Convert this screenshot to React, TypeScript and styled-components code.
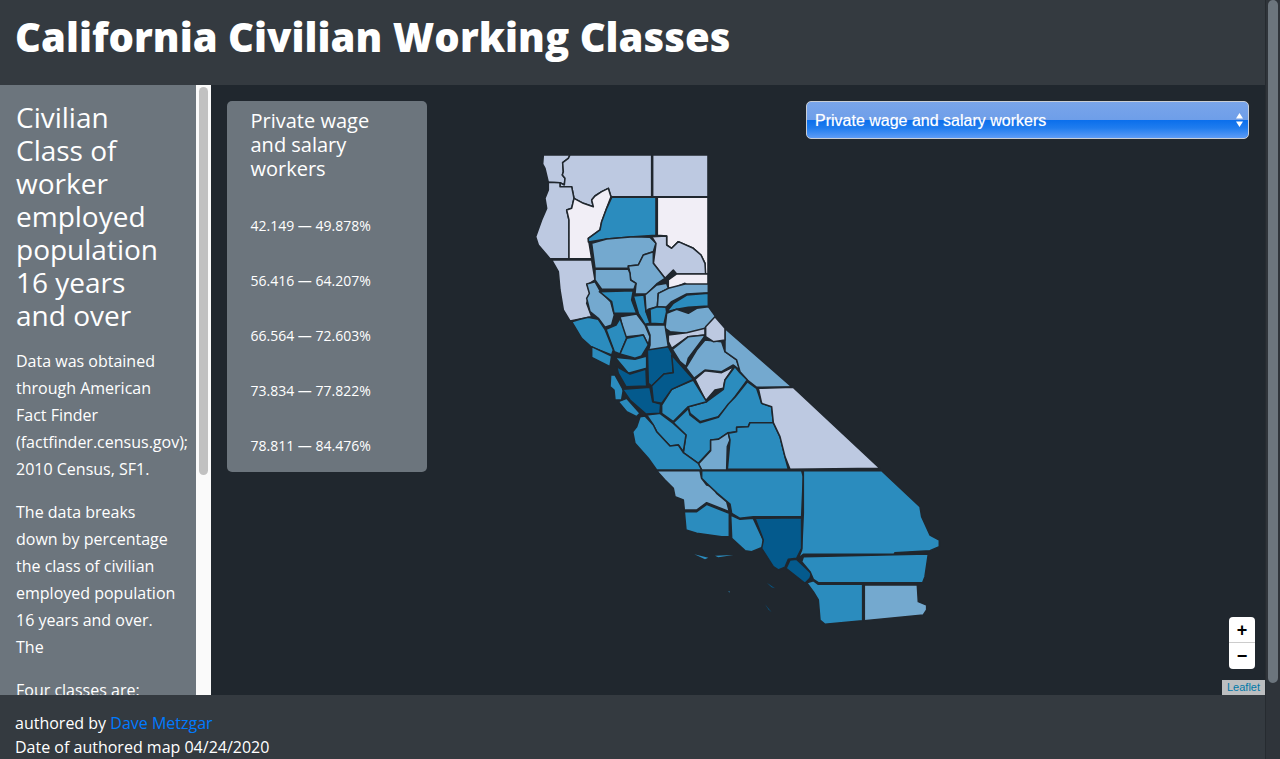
import React from "react";
import styled, { createGlobalStyle } from "styled-components";

const Global = createGlobalStyle`
  html, body { height: 100%; overflow: hidden; background: #343a40; }
  body { margin: 0; font-family: "Open Sans", "Liberation Sans", sans-serif; color: #fff; }
  #root { height: 100%; }
  * { box-sizing: border-box; }
`;

const Frame = styled.div`
  display: flex;
  height: 100%;
`;

const Page = styled.div`
  display: flex;
  flex-direction: column;
  flex: 1;
  min-width: 0;
`;

const PageTrack = styled.div`
  flex: none;
  width: 15px;
  background: #2f343a;
  border-left: 1px solid #262b30;
  padding: 0 2px 0 2px;
`;

const PageThumb = styled.div`
  height: 683px;
  background: #6c757d;
  border-radius: 5px;
`;

const Header = styled.header`
  height: 85px;
  flex: none;
  background: #343a40;
  padding: 9px 15px 0;
`;

const Title = styled.h1`
  margin: 0;
  font-size: 40px;
  line-height: 56px;
  font-weight: 800;
  letter-spacing: 0.03px;
`;

const Main = styled.main`
  display: flex;
  flex: none;
  height: 610px;
`;

const Sidebar = styled.aside`
  display: flex;
  width: 211px;
  flex: none;
  background: #6c757d;
`;

const SideContent = styled.div`
  flex: 1;
  min-width: 0;
  padding: 16px 16px 0;
  overflow: hidden;
`;

const SideTrack = styled.div`
  flex: none;
  width: 15px;
  background: #fafafa;
  padding: 2px 3px;
`;

const SideThumb = styled.div`
  height: 388px;
  background: #c1c1c1;
  border-radius: 5px;
`;

const SideTitle = styled.h3`
  margin: 0 0 16px;
  font-size: 28px;
  line-height: 33px;
  font-weight: 400;
`;

const SideText = styled.p`
  margin: 0 0 16px;
  font-size: 16px;
  line-height: 27px;
`;

const MapArea = styled.section`
  position: relative;
  flex: 1;
  background: #20272e;
  overflow: hidden;
`;

const MapSvg = styled.svg`
  position: absolute;
  inset: 0;
  width: 100%;
  height: 100%;
`;

const Legend = styled.div`
  position: absolute;
  left: 16px;
  top: 16px;
  width: 200px;
  height: 371px;
  background: #6c757d;
  border-radius: 5px;
  padding: 8px 23.5px;
`;

const LegendTitle = styled.h5`
  margin: 0 0 35px;
  font-size: 20px;
  line-height: 24px;
  font-weight: 400;
`;

const LegendList = styled.div`
  display: flex;
  flex-direction: column;
  gap: 36px;
`;

const LegendItem = styled.div`
  font-size: 14px;
  line-height: 19px;
`;

const SelectWrap = styled.div`
  position: absolute;
  top: 16px;
  right: 16px;
  width: 443px;
  height: 38px;
`;

const Select = styled.select`
  appearance: none;
  width: 100%;
  height: 100%;
  padding: 0 8px;
  border: 1px solid #c9ced6;
  border-radius: 5px;
  color: #fff;
  font-family: "Liberation Sans", Arial, sans-serif;
  font-size: 16px;
  text-shadow: 0 0 1px rgba(255, 255, 255, 0.5);
  background: linear-gradient(180deg, #79a5ea 0%, #6e9ee9 49%, #0b6fec 51%, #1f7cee 72%, #5e9cf6 100%);
  outline: none;
`;

const Arrows = styled.svg`
  position: absolute;
  right: 5px;
  top: 11px;
  width: 9px;
  height: 16px;
`;

const Zoom = styled.div`
  position: absolute;
  right: 10px;
  top: 532px;
  width: 26px;
  height: 52px;
  background: #fff;
  border-radius: 4px;
  display: flex;
  flex-direction: column;
`;

const ZoomButton = styled.div<{ $top?: boolean }>`
  height: 26px;
  color: #000;
  text-align: center;
  font-family: "Liberation Sans", Arial, sans-serif;
  font-weight: 700;
  font-size: 18px;
  line-height: 26px;
  border-bottom: ${(p) => (p.$top ? "1px solid #ccc" : "none")};
`;

const Attribution = styled.div`
  position: absolute;
  right: 0;
  bottom: 0;
  height: 15px;
  padding: 0 5px;
  background: rgba(255, 255, 255, 0.7);
  color: #0078a8;
  font-family: "Liberation Sans", Arial, sans-serif;
  font-size: 11px;
  line-height: 15px;
`;

const Footer = styled.footer`
  flex: 1;
  background: #343a40;
  padding: 16px 15px 0;
  font-size: 16px;
  line-height: 24px;
`;

const AuthorLink = styled.a`
  color: #007bff;
  text-decoration: none;
`;

const C = { w: "#f1eef6", p: "#bdc9e1", l: "#74a9cf", m: "#2b8cbe", d: "#045a8d" };

type Shape = [string, string, boolean?];
type Group = { x: number; y: number; shapes: Shape[] };

const groups: Group[] = [
  {
    x: 500, y: 140, shapes: [
      [C.p, "130,45 210,45 205,55 188,68 190,95 187,105 195,115 193,135 180,128 145,127 135,85 128,72"],
      [C.p, "210,45 455,45 455,170 333,170 325,145 305,155 285,168 275,180 280,200 250,190 222,175 215,140 180,140 180,128 193,135 195,115 187,105 190,95 188,68 205,55"],
      [C.p, "458,45 624,45 624,170 458,170"],
      [C.p, "145,127 180,128 180,140 215,140 222,175 215,205 200,210 207,240 207,356 150,356 115,315 107,290 125,240 140,205 135,175 145,150"],
      [C.w, "222,175 250,190 280,200 275,180 285,168 305,155 325,145 333,170 320,205 305,245 300,270 265,295 275,356 207,356 207,240 200,210 215,205"],
      [C.m, "335,172 468,172 468,286 400,290 320,297 265,306 265,295 300,270 305,245 320,205"],
      [C.w, "472,172 624,172 624,402 615,402 615,370 603,345 580,325 535,305 515,325 500,315 500,288 472,286"],
      [C.l, "275,310 320,297 400,290 450,292 468,310 460,335 430,345 415,375 385,378 385,385 285,385"],
      [C.p, "455,290 500,288 500,315 515,325 535,305 580,325 603,345 615,370 617,402 530,402 520,390 495,415 460,370 465,335 468,310"],
      [C.l, "385,378 415,375 430,345 460,335 460,370 495,415 470,432 440,462 405,462 408,430 392,420 390,400"],
      [C.w, "530,402 624,402 624,438 565,438 555,430 520,445 505,445 505,420"],
      [C.p, "155,360 275,360 285,420 262,435 270,460 260,490 275,530 210,543 190,510 180,450 175,395"],
      [C.l, "285,388 385,388 390,400 392,420 408,430 402,448 305,448 285,420"],
    ],
  },
  {
    x: 570, y: 270, shapes: [
      [C.l, "50,42 75,35 90,62 122,95 133,135 125,165 105,172 85,145 60,125 50,85 58,70"],
      [C.m, "88,65 190,62 185,90 200,130 132,130 125,95"],
      [C.m, "190,78 222,75 228,125 240,160 225,163 205,130"],
      [C.l, "225,75 260,45 290,40 295,55 265,70 262,110 235,118 228,125"],
      [C.l, "262,110 265,70 295,55 345,42 415,42 415,68 350,72 305,95 288,112"],
      [C.m, "290,125 310,100 350,75 415,70 415,108 355,112 320,118"],
      [C.l, "285,175 290,130 320,118 355,130 380,115 415,110 437,140 410,170 395,185 350,190 300,185"],
      [C.m, "240,118 262,110 288,112 290,125 282,162 242,160"],
      [C.l, "150,140 200,132 225,165 240,200 235,225 220,195 170,200 165,205"],
      [C.m, "108,178 138,165 150,145 170,205 150,252 133,245"],
      [C.m, "170,205 220,195 235,225 215,258 195,265 150,252"],
      [C.l, "228,165 285,165 295,230 230,260 240,225 240,195"],
      [C.m, "5,155 30,148 55,142 85,148 105,178 130,240 125,255 65,232 35,205"],
      [C.m, "65,230 125,258 120,290 65,262"],
      [C.m, "135,262 195,268 230,258 230,295 175,310"],
    ],
  },
  {
    x: 540, y: 300, shapes: [
      [C.p, "385,105 440,98 495,85 495,105 445,110 395,145 385,125"],
      [C.l, "397,148 445,110 495,105 490,115 445,175 438,200 420,185"],
      [C.l, "438,203 470,150 495,120 545,125 555,155 590,180 600,210 580,195 545,215 495,210 462,235"],
      [C.p, "465,238 495,212 545,218 582,200 555,240 550,265 525,270 497,302"],
      [C.l, "555,85 755,260 650,262 622,240 600,215 590,180 555,155 555,125"],
      [C.p, "525,50 555,85 555,120 520,125 497,110 497,80"],
      [C.m, "500,305 550,268 555,240 585,200 600,218 622,240 585,290 565,315 535,350 480,365 450,340 445,320"],
      [C.m, "365,315 395,268 460,240 500,305 445,320 400,365 365,340"],
      [C.m, "400,368 445,325 450,345 480,368 535,352 565,312 585,292 622,245 650,265 665,310 695,320 700,368 630,368 625,380 590,382 590,395 565,398 535,418 512,420 512,450 475,490 430,458 438,405"],
      [C.l, "475,492 512,452 512,420 535,418 565,398 570,420 562,440 560,510 485,510"],
      [C.m, "565,400 590,395 590,382 625,380 630,368 700,368 720,410 735,470 745,508 562,508 570,420"],
      [C.p, "655,265 760,262 1020,505 750,508 735,470 720,410 700,368 695,320 665,310"],
      [C.m, "320,345 360,340 400,370 438,405 430,455 415,435 390,438 350,395 340,375"],
      [C.m, "300,350 315,348 340,375 350,395 390,438 415,435 430,458 475,490 485,510 350,510 325,475 285,430 278,395 290,380"],
      [C.m, "235,305 260,295 300,340 290,350 260,335"],
      [C.m, "212,225 225,225 250,270 245,300 225,300 222,270 210,260"],
      [C.d, "230,200 270,222 318,207 320,258 258,260 235,220"],
      [C.d, "248,268 330,262 338,305 362,312 360,340 318,342 270,300"],
      [C.d, "322,150 385,140 398,165 400,218 372,222 335,258 325,250"],
      [C.d, "395,165 460,238 395,268 365,310 340,305 335,258 372,222 400,218"],
    ],
  },
  {
    x: 640, y: 460, shapes: [
      [C.l, "50,32 180,32 185,55 200,75 220,80 230,100 260,125 268,155 200,128 170,150 133,150 130,120 105,110 100,85 75,60"],
      [C.m, "185,32 485,32 490,50 485,170 340,170 300,175 275,160 270,132 232,100 200,70 185,55"],
      [C.m, "490,32 725,32 840,140 845,170 870,225 898,240 898,260 870,272 765,278 762,283 490,283 475,295 485,270 490,160"],
      [C.m, "133,155 170,155 200,133 268,160 268,230 245,230 170,220 138,210"],
      [C.m, "272,165 300,178 340,175 370,240 368,262 335,275 315,272 275,235"],
      [C.d, "345,175 485,173 485,265 470,295 445,298 435,322 415,330 400,320 365,265 370,240"],
      [C.d, "450,300 470,298 515,340 510,355 495,370 438,325"],
      [C.m, "490,290 865,282 855,350 848,368 535,368 520,358 510,335 485,305"],
      [C.m, "500,368 520,362 535,373 668,373 668,482 555,493 540,480 535,420 520,395"],
      [C.l, "673,375 832,375 835,425 860,435 860,450 850,465 673,482"],
      [C.m, "163,283 205,293 195,298", true],
      [C.m, "225,287 280,285 235,292", true],
      [C.d, "380,368 405,385 395,382", true],
      [C.m, "265,394 269,394 268,398", true],
      [C.d, "375,433 395,457 385,448", true],
    ],
  },
];

const californiaMap = groups.map((g) => (
  <g key={`${g.x}-${g.y}`} transform={`translate(${g.x} ${g.y}) scale(0.3333)`}>
    {g.shapes.map(([fill, points, bare]) => (
      <polygon
        key={points}
        points={points}
        fill={fill}
        stroke={bare ? "none" : "#20272e"}
        strokeWidth="4.6"
        strokeLinejoin="round"
      />
    ))}
  </g>
));

const ranges = [
  "42.149 — 49.878%",
  "56.416 — 64.207%",
  "66.564 — 72.603%",
  "73.834 — 77.822%",
  "78.811 — 84.476%",
];

export default function App() {
  return (
    <Frame>
      <Global />
      <Page>
        <Header>
          <Title>California Civilian Working Classes</Title>
        </Header>
        <Main>
          <Sidebar>
            <SideContent>
              <SideTitle>Civilian Class of worker employed population 16 years and over</SideTitle>
              <SideText>
                Data was obtained through American Fact Finder (factfinder.census.gov); 2010 Census, SF1.
              </SideText>
              <SideText>
                The data breaks down by percentage the class of civilian employed population 16 years and over. The
              </SideText>
              <SideText>Four classes are:</SideText>
            </SideContent>
            <SideTrack>
              <SideThumb />
            </SideTrack>
          </Sidebar>
          <MapArea>
            <MapSvg viewBox="211 85 1054 610">{californiaMap}</MapSvg>
            <Legend>
              <LegendTitle>Private wage and salary workers</LegendTitle>
              <LegendList>
                {ranges.map((r) => (
                  <LegendItem key={r}>{r}</LegendItem>
                ))}
              </LegendList>
            </Legend>
            <SelectWrap>
              <Select defaultValue="private">
                <option value="private">Private wage and salary workers</option>
              </Select>
              <Arrows viewBox="0 0 9 16">
                <path d="M4.5 1 L8 6.5 H1 Z M1 9.5 H8 L4.5 15 Z" fill="#fff" />
              </Arrows>
            </SelectWrap>
            <Zoom>
              <ZoomButton $top>+</ZoomButton>
              <ZoomButton>−</ZoomButton>
            </Zoom>
            <Attribution>Leaflet</Attribution>
          </MapArea>
        </Main>
        <Footer>
          authored by <AuthorLink href="#">Dave Metzgar</AuthorLink>
          <br />
          Date of authored map 04/24/2020
        </Footer>
      </Page>
      <PageTrack>
        <PageThumb />
      </PageTrack>
    </Frame>
  );
}
